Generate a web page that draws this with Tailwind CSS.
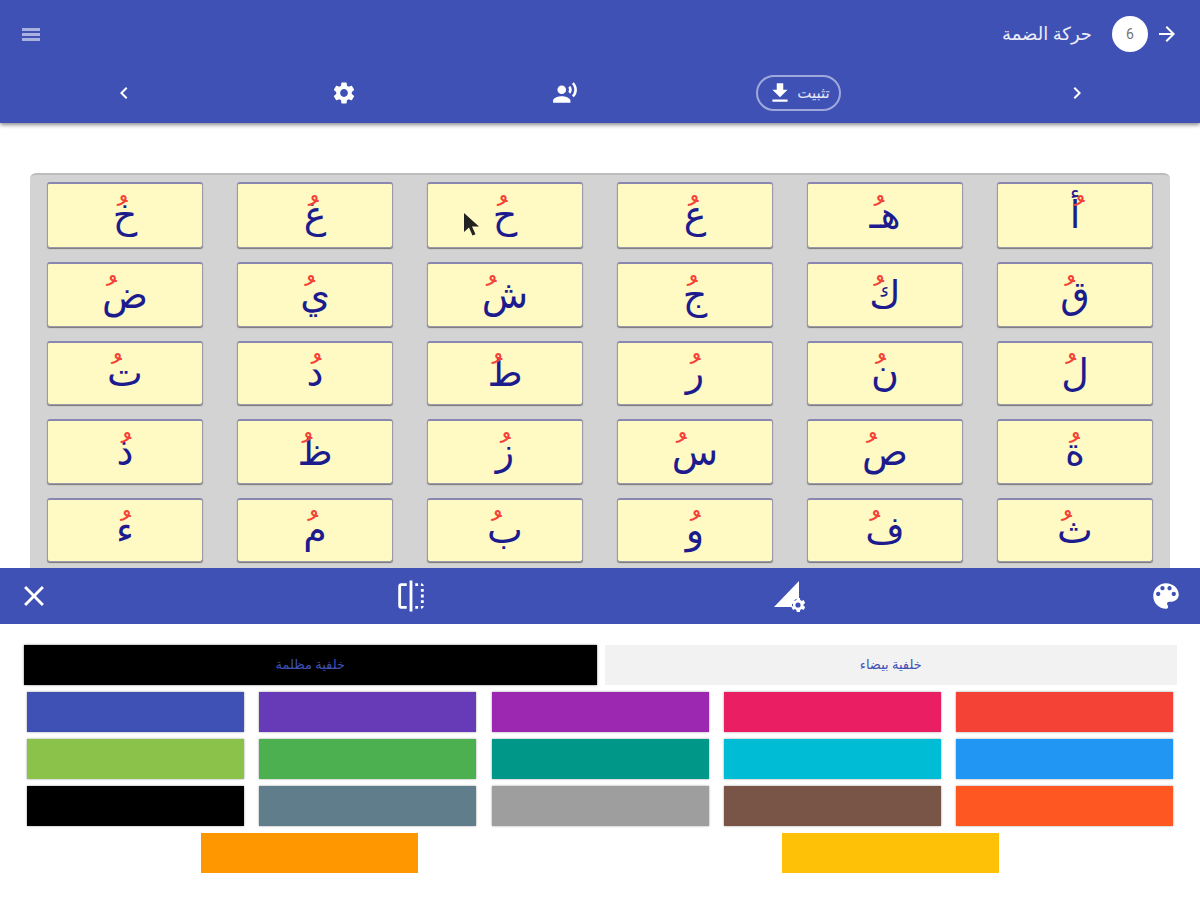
<!DOCTYPE html>
<html lang="ar">
<head>
<meta charset="UTF-8">
<title>حركة الضمة</title>
<script src="https://cdn.jsdelivr.net/npm/@tailwindcss/browser@4"></script>
</head>
<body class="relative w-[1200px] h-[900px] overflow-hidden bg-white font-['Liberation_Serif','Noto_Sans','DejaVu_Sans',sans-serif]">

  <!-- top app bar -->
  <header dir="rtl" class="relative z-10 h-[123px] bg-[#3f51b5] text-white shadow-[0_2px_4px_rgba(0,0,0,0.45)]">
    <div class="flex items-center h-[68px] pr-[21px] pl-[22px]">
      <svg class="w-6 h-6 fill-white" viewBox="0 0 24 24"><path d="M12 4l-1.41 1.41L16.17 11H4v2h12.17l-5.58 5.59L12 20l8-8z"/></svg>
      <div class="flex items-center justify-center w-9 h-9 mr-[7px] rounded-full bg-white text-[14px] text-[#757575] font-['Roboto']">6</div>
      <div class="mr-[20px] text-[18px] text-white/90">حركة الضمة</div>
      <div class="mr-auto flex flex-col justify-center gap-[2px] w-[18px] h-[14px]">
        <span class="h-[3px] bg-white/55"></span>
        <span class="h-[3px] bg-white/55"></span>
        <span class="h-[3px] bg-white/55"></span>
      </div>
    </div>
    <div class="flex items-center h-[50px] pr-[111px]">
      <svg class="w-6 h-6 fill-white" viewBox="0 0 24 24"><path d="M10 6L8.59 7.41 13.17 12l-4.58 4.59L10 18l6-6z"/></svg>
      <div class="flex items-center justify-center gap-[4px] w-[85px] h-[36px] mr-[224px] rounded-full border-2 border-white/50 text-[15px] text-white/85">
        <span>تثبيت</span>
        <svg class="w-[26px] h-[26px] fill-white" viewBox="0 0 24 24"><path d="M19 9h-4V3H9v6H5l7 7 7-7zM5 18v2h14v-2H5z"/></svg>
      </div>
      <svg class="w-[26px] h-[26px] mr-[178px] fill-white" viewBox="0 0 24 24"><circle cx="9" cy="9" r="4"/><path d="M9 15c-2.67 0-8 1.34-8 4v2h16v-2c0-2.66-5.33-4-8-4zm7.76-9.64l-1.68 1.69c.84 1.18.84 2.71 0 3.89l1.68 1.69c2.02-2.02 2.02-5.07 0-7.27zM20.07 2l-1.63 1.63c2.77 3.02 2.77 7.56 0 10.74L20.07 16c3.9-3.89 3.91-9.95 0-14z"/></svg>
      <svg class="w-[26px] h-[26px] mr-[195px] fill-white" viewBox="0 0 24 24"><path d="M19.14 12.94c.04-.3.06-.61.06-.94 0-.32-.02-.64-.07-.94l2.03-1.58c.18-.14.23-.41.12-.61l-1.92-3.32c-.12-.22-.37-.29-.59-.22l-2.39.96c-.5-.38-1.03-.7-1.62-.94l-.36-2.54c-.04-.24-.24-.41-.48-.41h-3.84c-.24 0-.43.17-.47.41l-.36 2.54c-.59.24-1.13.57-1.62.94l-2.39-.96c-.22-.08-.47 0-.59.22L2.74 8.87c-.12.21-.08.47.12.61l2.03 1.58c-.05.3-.09.63-.09.94s.02.64.07.94l-2.03 1.58c-.18.14-.23.41-.12.61l1.92 3.32c.12.22.37.29.59.22l2.39-.96c.5.38 1.03.7 1.62.94l.36 2.54c.05.24.24.41.48.41h3.84c.24 0 .44-.17.47-.41l.36-2.54c.59-.24 1.13-.56 1.62-.94l2.39.96c.22.08.47 0 .59-.22l1.92-3.32c.12-.22.07-.47-.12-.61l-2.01-1.58zM12 15.6c-1.98 0-3.6-1.62-3.6-3.6s1.62-3.6 3.6-3.6 3.6 1.62 3.6 3.6-1.62 3.6-3.6 3.6z"/></svg>
      <svg class="w-6 h-6 mr-[195px] fill-white" viewBox="0 0 24 24"><path d="M15.41 7.41L14 6l-6 6 6 6 1.41-1.41L10.83 12z"/></svg>
    </div>
  </header>

  <!-- letters -->
  <main class="h-[445px] pt-[50px] px-[30px]">
    <div dir="rtl" class="grid grid-cols-6 content-start gap-x-[34px] gap-y-[14px] h-[395px] px-[17px] pt-[7px] rounded-t-[6px] border-t-2 border-[#bdbdbd] bg-[#d3d3d3] text-[38px] text-[#1c1c8e]">
      <div class="flex items-center justify-center h-[66px] rounded-[3px] border border-[#9a9aa8] border-t-2 border-t-[#8a88b0] bg-[#fff9c4] shadow-[0_1px_1px_#777]">أ<span class="text-[#f44336]">ُ</span></div>
      <div class="flex items-center justify-center h-[66px] rounded-[3px] border border-[#9a9aa8] border-t-2 border-t-[#8a88b0] bg-[#fff9c4] shadow-[0_1px_1px_#777]">هـ<span class="text-[#f44336]">ُ</span></div>
      <div class="flex items-center justify-center h-[66px] rounded-[3px] border border-[#9a9aa8] border-t-2 border-t-[#8a88b0] bg-[#fff9c4] shadow-[0_1px_1px_#777]">ع<span class="text-[#f44336]">ُ</span></div>
      <div class="flex items-center justify-center h-[66px] rounded-[3px] border border-[#9a9aa8] border-t-2 border-t-[#8a88b0] bg-[#fff9c4] shadow-[0_1px_1px_#777]">ح<span class="text-[#f44336]">ُ</span></div>
      <div class="flex items-center justify-center h-[66px] rounded-[3px] border border-[#9a9aa8] border-t-2 border-t-[#8a88b0] bg-[#fff9c4] shadow-[0_1px_1px_#777]">غ<span class="text-[#f44336]">ُ</span></div>
      <div class="flex items-center justify-center h-[66px] rounded-[3px] border border-[#9a9aa8] border-t-2 border-t-[#8a88b0] bg-[#fff9c4] shadow-[0_1px_1px_#777]">خ<span class="text-[#f44336]">ُ</span></div>

      <div class="flex items-center justify-center h-[65px] rounded-[3px] border border-[#9a9aa8] border-t-2 border-t-[#8a88b0] bg-[#fff9c4] shadow-[0_1px_1px_#777]">ق<span class="text-[#f44336]">ُ</span></div>
      <div class="flex items-center justify-center h-[65px] rounded-[3px] border border-[#9a9aa8] border-t-2 border-t-[#8a88b0] bg-[#fff9c4] shadow-[0_1px_1px_#777]">ك<span class="text-[#f44336]">ُ</span></div>
      <div class="flex items-center justify-center h-[65px] rounded-[3px] border border-[#9a9aa8] border-t-2 border-t-[#8a88b0] bg-[#fff9c4] shadow-[0_1px_1px_#777]">ج<span class="text-[#f44336]">ُ</span></div>
      <div class="flex items-center justify-center h-[65px] rounded-[3px] border border-[#9a9aa8] border-t-2 border-t-[#8a88b0] bg-[#fff9c4] shadow-[0_1px_1px_#777]">ش<span class="text-[#f44336]">ُ</span></div>
      <div class="flex items-center justify-center h-[65px] rounded-[3px] border border-[#9a9aa8] border-t-2 border-t-[#8a88b0] bg-[#fff9c4] shadow-[0_1px_1px_#777]">ي<span class="text-[#f44336]">ُ</span></div>
      <div class="flex items-center justify-center h-[65px] rounded-[3px] border border-[#9a9aa8] border-t-2 border-t-[#8a88b0] bg-[#fff9c4] shadow-[0_1px_1px_#777]">ض<span class="text-[#f44336]">ُ</span></div>

      <div class="flex items-center justify-center h-[64px] rounded-[3px] border border-[#9a9aa8] border-t-2 border-t-[#8a88b0] bg-[#fff9c4] shadow-[0_1px_1px_#777]">ل<span class="text-[#f44336]">ُ</span></div>
      <div class="flex items-center justify-center h-[64px] rounded-[3px] border border-[#9a9aa8] border-t-2 border-t-[#8a88b0] bg-[#fff9c4] shadow-[0_1px_1px_#777]">ن<span class="text-[#f44336]">ُ</span></div>
      <div class="flex items-center justify-center h-[64px] rounded-[3px] border border-[#9a9aa8] border-t-2 border-t-[#8a88b0] bg-[#fff9c4] shadow-[0_1px_1px_#777]">ر<span class="text-[#f44336]">ُ</span></div>
      <div class="flex items-center justify-center h-[64px] rounded-[3px] border border-[#9a9aa8] border-t-2 border-t-[#8a88b0] bg-[#fff9c4] shadow-[0_1px_1px_#777]">ط<span class="text-[#f44336]">ُ</span></div>
      <div class="flex items-center justify-center h-[64px] rounded-[3px] border border-[#9a9aa8] border-t-2 border-t-[#8a88b0] bg-[#fff9c4] shadow-[0_1px_1px_#777]">د<span class="text-[#f44336]">ُ</span></div>
      <div class="flex items-center justify-center h-[64px] rounded-[3px] border border-[#9a9aa8] border-t-2 border-t-[#8a88b0] bg-[#fff9c4] shadow-[0_1px_1px_#777]">ت<span class="text-[#f44336]">ُ</span></div>

      <div class="flex items-center justify-center h-[65px] rounded-[3px] border border-[#9a9aa8] border-t-2 border-t-[#8a88b0] bg-[#fff9c4] shadow-[0_1px_1px_#777]">ة<span class="text-[#f44336]">ُ</span></div>
      <div class="flex items-center justify-center h-[65px] rounded-[3px] border border-[#9a9aa8] border-t-2 border-t-[#8a88b0] bg-[#fff9c4] shadow-[0_1px_1px_#777]">ص<span class="text-[#f44336]">ُ</span></div>
      <div class="flex items-center justify-center h-[65px] rounded-[3px] border border-[#9a9aa8] border-t-2 border-t-[#8a88b0] bg-[#fff9c4] shadow-[0_1px_1px_#777]">س<span class="text-[#f44336]">ُ</span></div>
      <div class="flex items-center justify-center h-[65px] rounded-[3px] border border-[#9a9aa8] border-t-2 border-t-[#8a88b0] bg-[#fff9c4] shadow-[0_1px_1px_#777]">ز<span class="text-[#f44336]">ُ</span></div>
      <div class="flex items-center justify-center h-[65px] rounded-[3px] border border-[#9a9aa8] border-t-2 border-t-[#8a88b0] bg-[#fff9c4] shadow-[0_1px_1px_#777]">ظ<span class="text-[#f44336]">ُ</span></div>
      <div class="flex items-center justify-center h-[65px] rounded-[3px] border border-[#9a9aa8] border-t-2 border-t-[#8a88b0] bg-[#fff9c4] shadow-[0_1px_1px_#777]">ذ<span class="text-[#f44336]">ُ</span></div>

      <div class="flex items-center justify-center h-[64px] rounded-[3px] border border-[#9a9aa8] border-t-2 border-t-[#8a88b0] bg-[#fff9c4] shadow-[0_1px_1px_#777]">ث<span class="text-[#f44336]">ُ</span></div>
      <div class="flex items-center justify-center h-[64px] rounded-[3px] border border-[#9a9aa8] border-t-2 border-t-[#8a88b0] bg-[#fff9c4] shadow-[0_1px_1px_#777]">ف<span class="text-[#f44336]">ُ</span></div>
      <div class="flex items-center justify-center h-[64px] rounded-[3px] border border-[#9a9aa8] border-t-2 border-t-[#8a88b0] bg-[#fff9c4] shadow-[0_1px_1px_#777]">و<span class="text-[#f44336]">ُ</span></div>
      <div class="flex items-center justify-center h-[64px] rounded-[3px] border border-[#9a9aa8] border-t-2 border-t-[#8a88b0] bg-[#fff9c4] shadow-[0_1px_1px_#777]">ب<span class="text-[#f44336]">ُ</span></div>
      <div class="flex items-center justify-center h-[64px] rounded-[3px] border border-[#9a9aa8] border-t-2 border-t-[#8a88b0] bg-[#fff9c4] shadow-[0_1px_1px_#777]">م<span class="text-[#f44336]">ُ</span></div>
      <div class="flex items-center justify-center h-[64px] rounded-[3px] border border-[#9a9aa8] border-t-2 border-t-[#8a88b0] bg-[#fff9c4] shadow-[0_1px_1px_#777]">ء<span class="text-[#f44336]">ُ</span></div>
    </div>
  </main>

  <!-- mouse pointer in the recording -->
  <svg class="absolute left-[463px] top-[212px] w-[18px] h-[26px]" viewBox="0 0 18 26"><path d="M1 1l0 19 5-4.5 3.5 8 3-1.3-3.5-7.7 7 0z" fill="#222"/></svg>

  <!-- bottom toolbar -->
  <div class="flex items-center justify-between h-[56px] px-[17px] bg-[#3f51b5]">
    <svg class="w-[34px] h-[34px] fill-white" viewBox="0 0 24 24"><path d="M19 6.41L17.59 5 12 10.59 6.41 5 5 6.41 10.59 12 5 17.59 6.41 19 12 13.41 17.59 19 19 17.59 13.41 12z"/></svg>
    <svg class="w-[34px] h-[34px] fill-white" viewBox="0 0 24 24"><path d="M15 21h2v-2h-2v2zm4-12h2V7h-2v2zM3 5v14c0 1.1.9 2 2 2h4v-2H5V5h4V3H5c-1.1 0-2 .9-2 2zm16-2v2h2c0-1.1-.9-2-2-2zm-8 20h2V1h-2v22zm8-6h2v-2h-2v2zM15 5h2V3h-2v2zm4 8h2v-2h-2v2zm0 8c1.1 0 2-.9 2-2h-2v2z"/></svg>
    <svg class="w-[34px] h-[34px] fill-white" viewBox="0 0 34 34"><path d="M27 2v17a8 8 0 0 0-7 9H2z"/><path transform="translate(0.6 1.5)" d="M31 24.5c0-.3 0-.6-.1-.8l1.7-1.3-1.6-2.8-2 .8c-.4-.3-.9-.6-1.4-.8l-.3-2.1h-3.2l-.3 2.1c-.5.2-1 .5-1.4.8l-2-.8-1.6 2.8 1.7 1.3c-.1.2-.1.5-.1.8s0 .6.1.8l-1.7 1.3 1.6 2.8 2-.8c.4.3.9.6 1.4.8l.3 2.1h3.2l.3-2.1c.5-.2 1-.5 1.4-.8l2 .8 1.6-2.8-1.7-1.3c.1-.2.1-.5.1-.8zm-5.6 2.6a2.6 2.6 0 1 1 0-5.2 2.6 2.6 0 0 1 0 5.2z"/></svg>
    <svg class="w-[34px] h-[34px] fill-white" viewBox="0 0 24 24"><path d="M12 3c-4.97 0-9 4.03-9 9s4.03 9 9 9c.83 0 1.5-.67 1.5-1.5 0-.39-.15-.74-.39-1.01-.23-.26-.38-.61-.38-.99 0-.83.67-1.5 1.5-1.5H16c2.76 0 5-2.24 5-5 0-4.42-4.03-8-9-8zm-5.5 9c-.83 0-1.5-.67-1.5-1.5S5.67 9 6.5 9 8 9.67 8 10.5 7.33 12 6.5 12zm3-4C8.67 8 8 7.33 8 6.5S8.67 5 9.5 5s1.5.67 1.5 1.5S10.33 8 9.5 8zm5 0c-.83 0-1.5-.67-1.5-1.5S13.67 5 14.5 5s1.5.67 1.5 1.5S15.33 8 14.5 8zm3 4c-.83 0-1.5-.67-1.5-1.5S16.67 9 17.5 9s1.5.67 1.5 1.5-.67 1.5-1.5 1.5z"/></svg>
  </div>

  <!-- colour picker -->
  <section dir="rtl" class="pt-[21px]">
    <div class="flex gap-[8px] h-[40px] pr-[23px] pl-[24px] text-[13px] text-[#3f51b5]">
      <div class="flex flex-1 items-center justify-center bg-[#f2f2f2]">خلفية بيضاء</div>
      <div class="flex flex-1 items-center justify-center bg-black shadow-[0_0_2px_#777]">خلفية مظلمة</div>
    </div>
    <div class="flex flex-wrap justify-around gap-y-[7px] mt-[7px] mx-[19px]">
      <div class="w-[217px] h-[40px] bg-[#f44336] shadow-[0_0_2px_#999]"></div>
      <div class="w-[217px] h-[40px] bg-[#e91e63] shadow-[0_0_2px_#999]"></div>
      <div class="w-[217px] h-[40px] bg-[#9c27b0] shadow-[0_0_2px_#999]"></div>
      <div class="w-[217px] h-[40px] bg-[#673ab7] shadow-[0_0_2px_#999]"></div>
      <div class="w-[217px] h-[40px] bg-[#3f51b5] shadow-[0_0_2px_#999]"></div>
      <div class="w-[217px] h-[40px] bg-[#2196f3] shadow-[0_0_2px_#999]"></div>
      <div class="w-[217px] h-[40px] bg-[#00bcd4] shadow-[0_0_2px_#999]"></div>
      <div class="w-[217px] h-[40px] bg-[#009688] shadow-[0_0_2px_#999]"></div>
      <div class="w-[217px] h-[40px] bg-[#4caf50] shadow-[0_0_2px_#999]"></div>
      <div class="w-[217px] h-[40px] bg-[#8bc34a] shadow-[0_0_2px_#999]"></div>
      <div class="w-[217px] h-[40px] bg-[#ff5722] shadow-[0_0_2px_#999]"></div>
      <div class="w-[217px] h-[40px] bg-[#795548] shadow-[0_0_2px_#999]"></div>
      <div class="w-[217px] h-[40px] bg-[#9e9e9e] shadow-[0_0_2px_#999]"></div>
      <div class="w-[217px] h-[40px] bg-[#607d8b] shadow-[0_0_2px_#999]"></div>
      <div class="w-[217px] h-[40px] bg-black shadow-[0_0_2px_#999]"></div>
      <div class="w-[217px] h-[40px] bg-[#ffc107]"></div>
      <div class="w-[217px] h-[40px] bg-[#ff9800]"></div>
    </div>
  </section>

</body>
</html>
